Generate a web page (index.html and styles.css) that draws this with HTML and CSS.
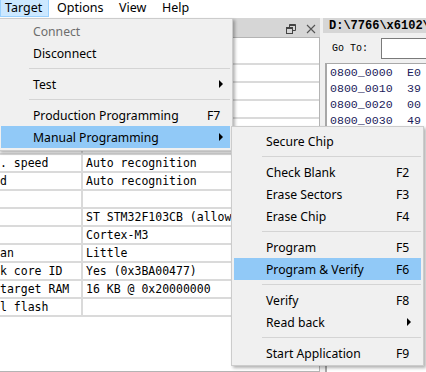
FILE: index.html
```html
<!DOCTYPE html>
<html lang="en">
<head>
    <meta charset="UTF-8">
    <title>J-Flash</title>
    <link rel="stylesheet" href="styles.css">
</head>
<body>
    <div class="menubar">
        <span class="mb-item mb-target active">Target</span>
        <span class="mb-item mb-options">Options</span>
        <span class="mb-item mb-view">View</span>
        <span class="mb-item mb-help">Help</span>
    </div>

    <div class="workspace">
        <div class="info-panel">
            <div class="panel-title">
                <svg class="restore-icon" width="10" height="10" viewBox="0 0 10 10">
                    <rect x="0.5" y="3.5" width="6" height="6" fill="none" stroke="#444"/>
                    <rect x="0.5" y="3.5" width="6" height="1.5" fill="#444"/>
                    <path d="M3.5 3.5 V0.5 H9.5 V6.5 H6.5" fill="none" stroke="#444"/>
                    <rect x="3.5" y="0.5" width="6" height="1.5" fill="#444"/>
                </svg>
                <svg class="close-icon" width="10" height="10" viewBox="0 0 10 10">
                    <path d="M1 1 L9 9 M9 1 L1 9" stroke="#555" stroke-width="1.1"/>
                </svg>
            </div>
            <div class="info-body">
                <div class="info-table">
                    <!-- rows hidden under the Target menu -->
                    <div class="row"><div class="key"></div><div class="val"></div></div>
                    <div class="row"><div class="key"></div><div class="val"></div></div>
                    <div class="row"><div class="key"></div><div class="val"></div></div>
                    <div class="row"><div class="key"></div><div class="val"></div></div>
                    <div class="row"><div class="key"></div><div class="val"></div></div>
                    <div class="row"><div class="key">. speed</div><div class="val">Auto recognition</div></div>
                    <div class="row"><div class="key">d</div><div class="val">Auto recognition</div></div>
                    <div class="row"><div class="key"></div><div class="val"></div></div>
                    <div class="row"><div class="key"></div><div class="val">ST STM32F103CB (allow</div></div>
                    <div class="row"><div class="key"></div><div class="val">Cortex-M3</div></div>
                    <div class="row"><div class="key">an</div><div class="val">Little</div></div>
                    <div class="row"><div class="key">k core ID</div><div class="val">Yes (0x3BA00477)</div></div>
                    <div class="row"><div class="key">target RAM</div><div class="val">16 KB @ 0x20000000</div></div>
                    <div class="row"><div class="key">l flash</div><div class="val"></div></div>
                </div>
            </div>
        </div>

        <div class="hex-panel">
            <div class="hex-title">D:\7766\x6102\</div>
            <div class="goto">
                <span class="goto-label">Go To:</span>
                <input class="goto-input" type="text">
            </div>
            <div class="hex-list">
                <div class="hex-row"><span class="addr">0800_0000</span><span>E0</span></div>
                <div class="hex-row"><span class="addr">0800_0010</span><span>39</span></div>
                <div class="hex-row"><span class="addr">0800_0020</span><span>00</span></div>
                <div class="hex-row"><span class="addr">0800_0030</span><span>49</span></div>
                <!-- rows hidden under the submenu -->
                <div class="hex-row"></div>
                <div class="hex-row"></div>
                <div class="hex-row"></div>
                <div class="hex-row"></div>
                <div class="hex-row"></div>
                <div class="hex-row"></div>
                <div class="hex-row"></div>
                <div class="hex-row"></div>
                <div class="hex-row"></div>
                <div class="hex-row"></div>
                <div class="hex-row"></div>
                <div class="hex-row"></div>
                <div class="hex-row"></div>
                <div class="hex-row"></div>
                <div class="hex-row"></div>
                <div class="hex-row"><span class="addr">0800_0130</span><span>99</span></div>
            </div>
        </div>
    </div>

    <!-- Target dropdown -->
    <div class="menu target-menu">
        <div class="mi disabled"><span class="lbl">Connect</span></div>
        <div class="mi"><span class="lbl">Disconnect</span></div>
        <div class="sep"></div>
        <div class="mi"><span class="lbl">Test</span><span class="arrow"></span></div>
        <div class="sep"></div>
        <div class="mi"><span class="lbl">Production Programming</span><span class="sc">F7</span></div>
        <div class="mi hl"><span class="lbl">Manual Programming</span><span class="arrow"></span></div>
    </div>

    <!-- Manual Programming submenu -->
    <div class="menu sub-menu">
        <div class="mi"><span class="lbl">Secure Chip</span></div>
        <div class="sep"></div>
        <div class="mi"><span class="lbl">Check Blank</span><span class="sc">F2</span></div>
        <div class="mi"><span class="lbl">Erase Sectors</span><span class="sc">F3</span></div>
        <div class="mi"><span class="lbl">Erase Chip</span><span class="sc">F4</span></div>
        <div class="sep"></div>
        <div class="mi"><span class="lbl">Program</span><span class="sc">F5</span></div>
        <div class="mi hl"><span class="lbl">Program &amp; Verify</span><span class="sc">F6</span></div>
        <div class="sep"></div>
        <div class="mi"><span class="lbl">Verify</span><span class="sc">F8</span></div>
        <div class="mi"><span class="lbl">Read back</span><span class="arrow"></span></div>
        <div class="sep"></div>
        <div class="mi"><span class="lbl">Start Application</span><span class="sc">F9</span></div>
    </div>
</body>
</html>
```

FILE: styles.css
```css
body {
    margin: 0;
    width: 426px;
    height: 372px;
    overflow: hidden;
    background-color: #f0f0f0;
    font-family: "Noto Sans", "Open Sans", sans-serif;
    font-size: 12.2px;
    color: #000;
}
.menubar {
    height: 18px;
    background: white;
    display: flex;
}
.mb-item {
    box-sizing: border-box;
    height: 18px;
    line-height: 16px;
    padding-left: 8px;
    font-size: 12.5px;
}
.mb-target {
    width: 50px;
    padding-left: 5px;
}
.mb-options {
    width: 62px;
}
.mb-view {
    width: 43px;
}
.mb-help {
    width: 50px;
}
.mb-item.active {
    background-color: #cce8ff;
    border: 1px solid #99d1ff;
    border-top: none;
    padding-left: 4px;
    width: 49px;
    height: 17px;
}

.workspace {
    display: flex;
    gap: 3px;
    height: 354px;
}
.info-panel {
    width: 320px;
    display: flex;
    flex-direction: column;
}
.panel-title {
    height: 15px;
    background-color: #d6d6d6;
    display: flex;
    align-items: center;
    justify-content: flex-end;
    gap: 10px;
    padding: 3px 4px 1px 0;
}
.info-body {
    flex: 1;
    background: white;
    border: 1px solid #b4b4b4;
    border-left: none;
    padding-top: 25px;
    font-family: "DejaVu Sans Mono", monospace;
    font-size: 11.5px;
}
.info-table {
    border-top: 2px solid #dadada;
}
.row {
    display: flex;
    height: 16px;
    line-height: 16px;
    border-bottom: 2px solid #dadada;
    white-space: nowrap;
}
.row .key {
    width: 81px;
    border-right: 2px solid #dadada;
    overflow: hidden;
}
.row .val {
    padding-left: 3px;
}

.hex-panel {
    flex: 1;
    display: flex;
    flex-direction: column;
    overflow: hidden;
}
.hex-title {
    height: 15px;
    line-height: 16px;
    background-color: #d6d6d6;
    padding-left: 6px;
    font-family: "Liberation Mono", monospace;
    font-weight: bold;
    font-size: 12px;
    white-space: nowrap;
}
.goto {
    height: 30px;
    flex-shrink: 0;
    display: flex;
    align-items: center;
    white-space: nowrap;
    font-family: "Liberation Mono", monospace;
    font-size: 10px;
}
.goto-label {
    box-sizing: border-box;
    flex-shrink: 0;
    width: 58px;
    padding-left: 9px;
}
.goto-input {
    box-sizing: border-box;
    flex-shrink: 0;
    width: 60px;
    height: 21px;
    border: 1px solid #7a7a7a;
    margin: 0;
    padding: 0;
}
.hex-list {
    flex: 1;
    background: white;
    border-left: 2px solid #a8a8a8;
    border-top: 1px solid #a8a8a8;
    margin-left: 2px;
    padding-top: 1px;
    font-family: "Liberation Mono", monospace;
    font-size: 11.6px;
    color: #1c1c5c;
}
.hex-row {
    height: 16px;
    line-height: 16px;
    padding-left: 3px;
    white-space: nowrap;
}
.hex-row .addr {
    display: inline-block;
    width: 77px;
}

/* popup menus */
.menu {
    position: absolute;
    box-sizing: border-box;
    background-color: #f0f0f0;
    border: 1px solid #cccccc;
    padding: 1px 2px;
    box-shadow: 2px 2px 3px rgba(0, 0, 0, 0.3);
}
.target-menu {
    left: -2px;
    top: 18px;
    width: 235px;
    height: 133px;
}
.sub-menu {
    left: 231px;
    top: 126px;
    width: 193px;
    padding-top: 3px;
}
.mi {
    display: flex;
    align-items: center;
    height: 22px;
    padding-left: 32px;
    white-space: nowrap;
}
.mi .lbl {
    flex: 1;
}
.mi.disabled {
    color: #6d6d6d;
}
.mi.hl {
    background-color: #91c9f7;
}
.target-menu .sc {
    width: 23px;
}
.sub-menu .sc {
    width: 25px;
}
.arrow {
    width: 0;
    height: 0;
    border-left: 4px solid #000;
    border-top: 4px solid transparent;
    border-bottom: 4px solid transparent;
}
.target-menu .arrow {
    margin-right: 7px;
}
.sub-menu .arrow {
    margin-right: 10px;
}
.sep {
    height: 1px;
    background-color: #d4d4d4;
    margin: 4px 0 4px 28px;
}
```
